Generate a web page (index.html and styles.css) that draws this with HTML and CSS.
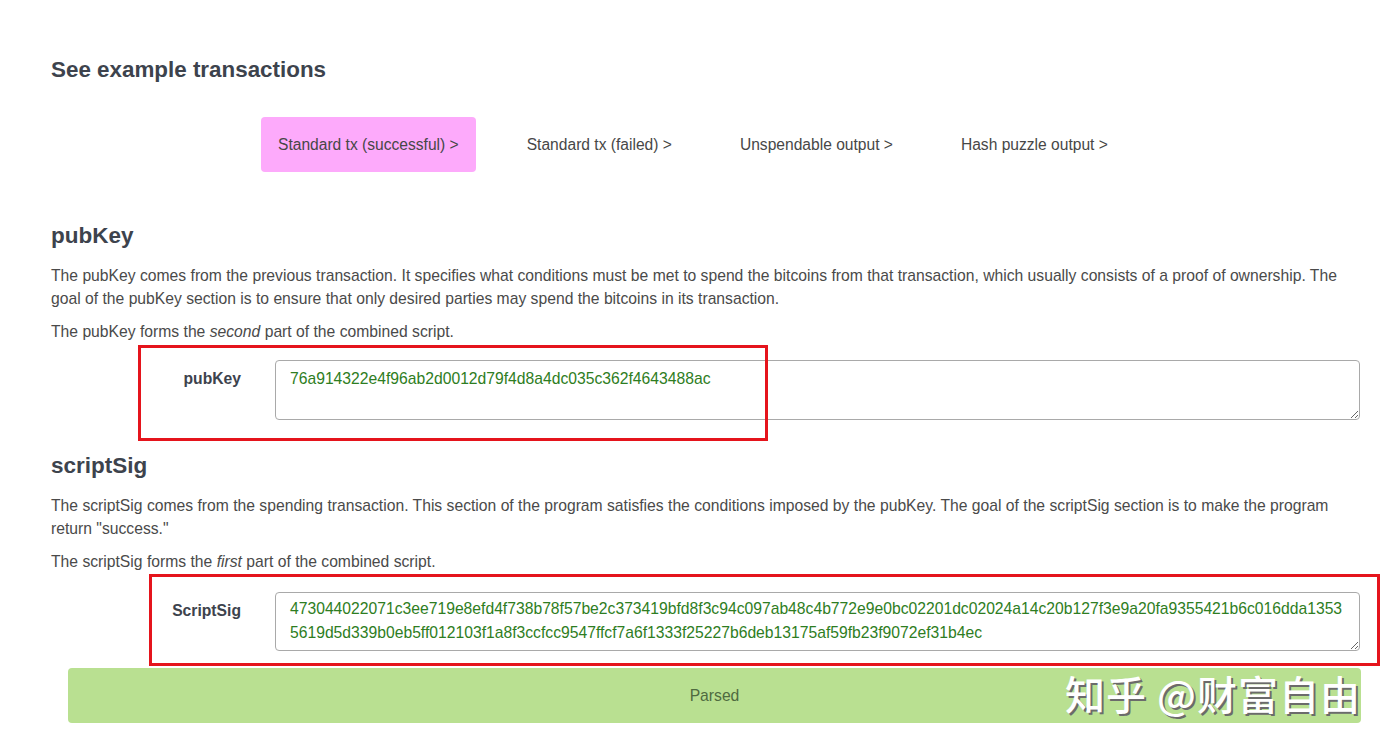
FILE: index.html
```html
<!DOCTYPE html>
<html lang="en">
<head>
    <meta charset="UTF-8">
    <title>Script playground</title>
    <link rel="stylesheet" href="styles.css">
</head>
<body>

<div class="container">
    <h3 class="examples-title">See example transactions</h3>

    <div class="tabs">
        <button class="tab active">Standard tx (successful) &gt;</button>
        <button class="tab">Standard tx (failed) &gt;</button>
        <button class="tab">Unspendable output &gt;</button>
        <button class="tab">Hash puzzle output &gt;</button>
    </div>

    <!-- pubKey -->
    <h2 class="section-title pubkey-title">pubKey</h2>
    <p>The pubKey comes from the previous transaction. It specifies what conditions must be met to spend the bitcoins from that transaction, which usually consists of a proof of ownership. The goal of the pubKey section is to ensure that only desired parties may spend the bitcoins in its transaction.</p>
    <p>The pubKey forms the <em>second</em> part of the combined script.</p>

    <div class="field-row pubkey-row">
        <label class="field-label">pubKey</label>
        <textarea class="field-input pubkey-input">76a914322e4f96ab2d0012d79f4d8a4dc035c362f4643488ac</textarea>
        <div class="mark mark-pubkey"></div>
    </div>

    <!-- scriptSig -->
    <h2 class="section-title scriptsig-title">scriptSig</h2>
    <p>The scriptSig comes from the spending transaction. This section of the program satisfies the conditions imposed by the pubKey. The goal of the scriptSig section is to make the program return "success."</p>
    <p>The scriptSig forms the <em>first</em> part of the combined script.</p>

    <div class="field-row scriptsig-row">
        <label class="field-label">ScriptSig</label>
        <textarea class="field-input scriptsig-input">473044022071c3ee719e8efd4f738b78f57be2c373419bfd8f3c94c097ab48c4b772e9e0bc02201dc02024a14c20b127f3e9a20fa9355421b6c016dda13535619d5d339b0eb5ff012103f1a8f3ccfcc9547ffcf7a6f1333f25227b6deb13175af59fb23f9072ef31b4ec</textarea>
        <div class="mark mark-scriptsig"></div>
    </div>

    <div class="status-bar">
        Parsed
        <span class="watermark">知乎 @财富自由</span>
    </div>
</div>

</body>
</html>
```

FILE: styles.css
```css
body {
    font-family: "Liberation Sans", Arial, sans-serif;
    font-size: 15.7px;
    line-height: 23px;
    color: #4a4a4a;
    background-color: #ffffff;
    margin: 0;
    padding: 0;
}
.container {
    width: 1310px;
    margin-left: 51px;
    padding-top: 57px;
}
.examples-title {
    font-size: 22.4px;
    line-height: 26px;
    font-weight: bold;
    color: #3d434d;
    margin: 0;
}
.tabs {
    display: flex;
    gap: 34px;
    margin: 34px 0 0 210px;
}
.tab {
    font-family: "Liberation Sans", Arial, sans-serif;
    font-size: 15.6px;
    color: #474747;
    background: none;
    border: none;
    border-radius: 4px;
    height: 55px;
    padding: 0 17px;
    cursor: pointer;
}
.tab.active {
    background-color: #fdaafb;
}
.section-title {
    font-size: 22.5px;
    line-height: 28px;
    font-weight: bold;
    color: #3d434d;
    margin: 50px 0 14px 0;
}
.scriptsig-title {
    margin-top: 32px;
}
p {
    margin: 0 0 10px 0;
}
.field-row {
    position: relative;
    display: flex;
    gap: 34px;
    margin-top: 17px;
}
.field-label {
    width: 190px;
    flex-shrink: 0;
    text-align: right;
    font-weight: bold;
    color: #3d434d;
    padding-top: 7px;
}
.field-input {
    flex: 1;
    height: 60px;
    box-sizing: border-box;
    font-family: "Liberation Sans", Arial, sans-serif;
    font-size: 15.7px;
    line-height: 24px;
    color: #2e7d22;
    border: 1px solid #a9a9a9;
    border-radius: 4px;
    padding: 6px 14px 4px 14px;
    margin-right: 1px;
}
.scriptsig-row {
    margin-top: 19px;
}
.scriptsig-input {
    height: 59px;
    padding-top: 4px;
}
/* riquadri rossi di evidenziazione */
.mark {
    position: absolute;
    border: 3px solid #e5141c;
    box-sizing: border-box;
}
.mark-pubkey {
    left: 87px;
    top: -15px;
    width: 630px;
    height: 96px;
}
.mark-scriptsig {
    left: 98px;
    top: -18px;
    width: 1231px;
    height: 92px;
}
.status-bar {
    position: relative;
    margin: 17px 0 0 17px;
    height: 55px;
    line-height: 55px;
    text-align: center;
    background-color: #b9e091;
    border-radius: 4px;
    color: #4f6b40;
}
.watermark {
    position: absolute;
    right: 0;
    top: 3px;
    line-height: 44px;
    font-family: "Noto Sans CJK SC", sans-serif;
    font-size: 40px;
    font-weight: 500;
    color: #ffffff;
    text-shadow: 2px 2px 0 #6b6b6b;
    letter-spacing: 1px;
}
```
